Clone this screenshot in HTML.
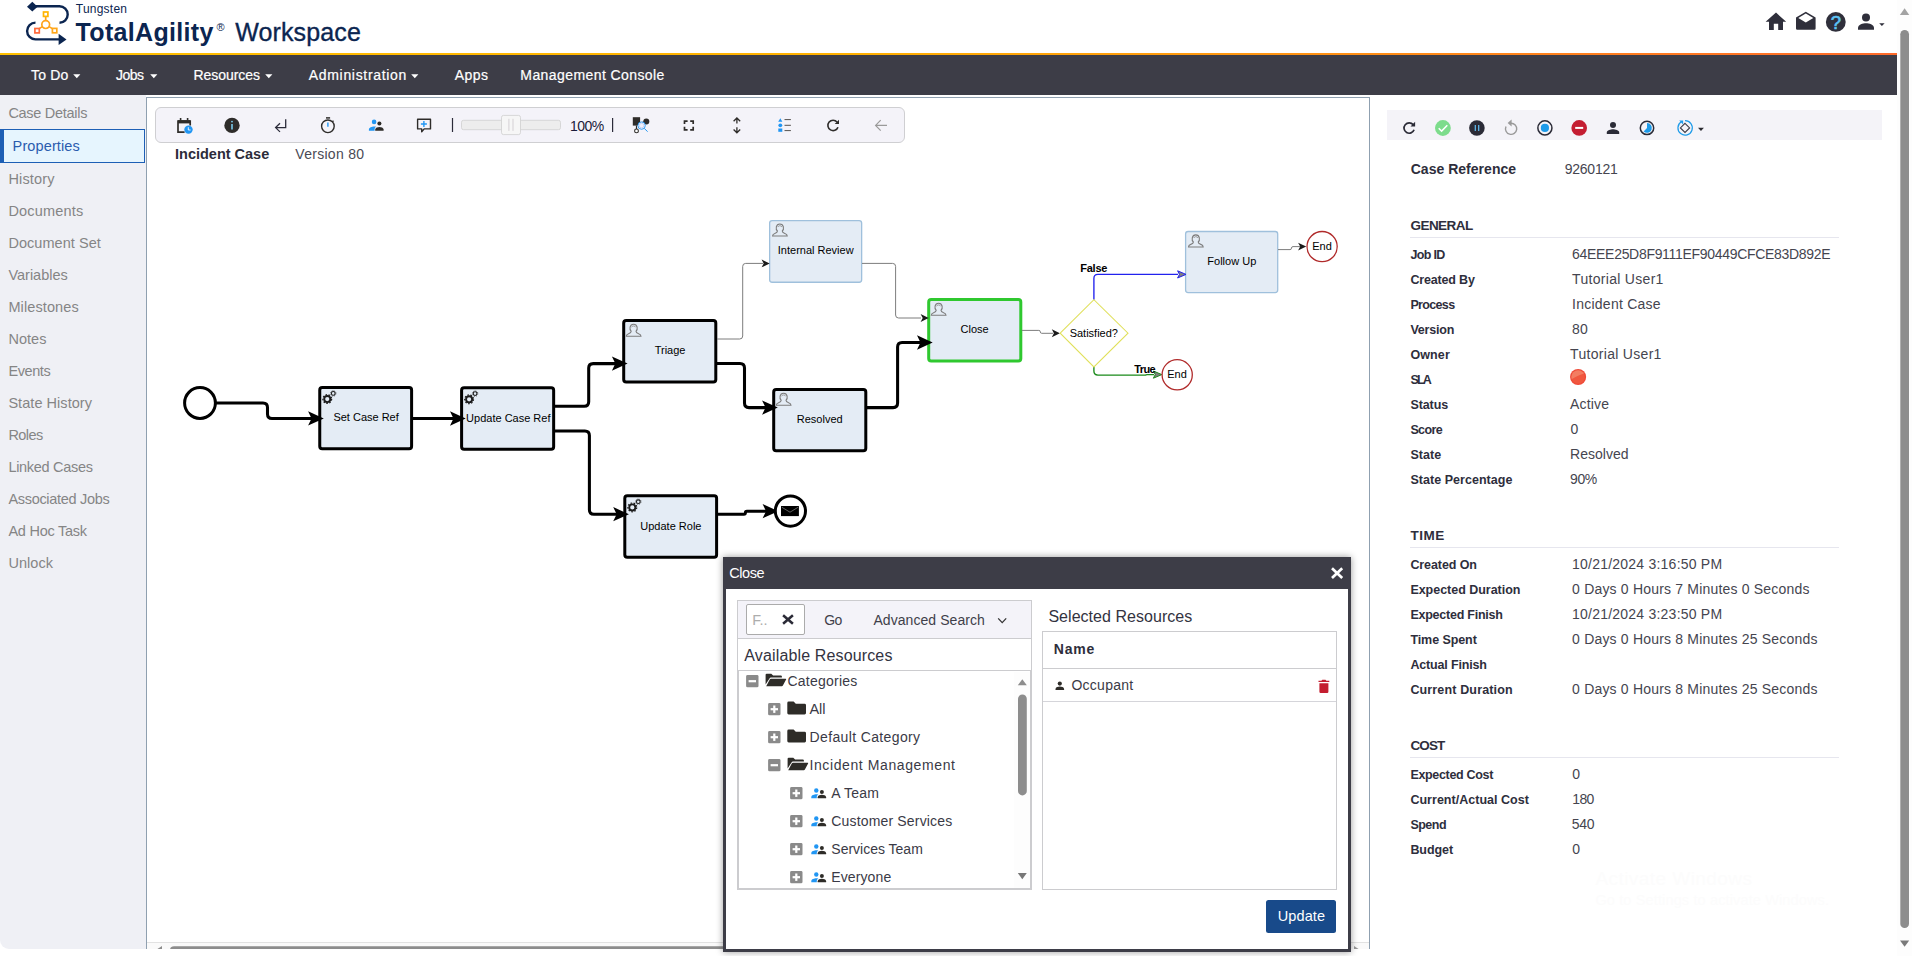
<!DOCTYPE html>
<html><head><meta charset="utf-8"><title>TotalAgility Workspace</title>
<style>
html,body{margin:0;padding:0;}
body{width:1912px;height:956px;overflow:hidden;background:#fff;position:relative;font-family:"Liberation Sans",sans-serif;}
.t{position:absolute;white-space:nowrap;line-height:1;}
.b{position:absolute;box-sizing:border-box;}
svg{position:absolute;overflow:visible;}
</style></head><body>
<div class="b" style="left:1897px;top:0px;width:15px;height:956px;background:#fdfdfd;"></div>
<div class="b" style="left:0px;top:53px;width:1897px;height:2px;background:linear-gradient(90deg,#ffc000 0%,#ffb000 45%,#ff6a2a 100%);"></div>
<div class="b" style="left:0px;top:55px;width:1897px;height:40px;background:#3d3d47;"></div>
<div class="b" style="left:0px;top:95px;width:146px;height:854px;background:#eff0f5;border-radius:0 0 0 9px;"></div>
<div class="b" style="left:146px;top:97px;width:1224px;height:852px;background:#fff;border:1px solid #8fa0b0;border-bottom:none;"></div>
<div class="b" style="left:1371px;top:95px;width:526px;height:861px;background:#fff;"></div>
<div class="b" style="left:147px;top:942px;width:1222px;height:7px;background:#fafafa;border-top:1px solid #e2e2e2;"></div>
<svg style="left:147px;top:943px;overflow:hidden" width="1222" height="6" viewBox="147 943 1222 6"><path d="M156.5 949.6 L162 946 V949.6 Z" fill="#8d8d8d"/><rect x="170" y="946.2" width="1170" height="9" rx="4" fill="#8d8d8d"/><path d="M1354 946 L1359.5 949.6 H1354 Z" fill="#9a9a9a"/></svg>
<svg style="left:15px;top:0" width="120" height="50" viewBox="0 0 120 50">
<g fill="none" stroke="#0b2550" stroke-width="2.4" stroke-linecap="butt">
<path d="M20 6.3 H44.5 A8.2 8.2 0 0 1 44.5 22.7"/>
<path d="M20.5 22.6 A8.4 8.4 0 0 0 20.5 39.4 H45"/>
</g>
<path d="M12 6.7 L17.3 1.8 L22.6 6.7 L17.3 11.6 Z" fill="#0b2550"/>
<path d="M43.6 33.8 L51.5 39.4 L43.6 45 Z" fill="#0b2550"/>
<g fill="none" stroke-width="1.7">
<circle cx="30.7" cy="24.6" r="3.9" stroke="#ffa31a"/>
<path d="M30.7 20.7 V16.6 M27.3 26.6 L24.3 28.6 M34.1 26.6 L37.3 28.6" stroke="#ffa31a"/>
<rect x="28.5" y="12" width="4.4" height="4.4" stroke="#ffb400"/>
<rect x="19.9" y="28.5" width="4.4" height="4.4" stroke="#ff6a3c"/>
<rect x="37.4" y="28.4" width="4.4" height="4.4" stroke="#ffa71a"/>
</g></svg>
<div class="t" style="left:75.80px;top:3px;font-size:12px;letter-spacing:0.230px;color:#0b2550;">Tungsten</div>
<div class="t" style="left:75.60px;top:20px;font-size:25px;font-weight:bold;letter-spacing:0.313px;color:#0b2550;">TotalAgility</div>
<div class="t" style="left:216.60px;top:22px;font-size:11px;color:#0b2550;">®</div>
<div class="t" style="left:235.20px;top:20px;font-size:25px;letter-spacing:0.127px;color:#0b2550;-webkit-text-stroke:0.35px #0b2550;">Workspace</div>
<svg style="left:1760px;top:8px" width="130" height="30" viewBox="1760 8 130 30">
<g fill="#2f2f3b">
<path d="M1765.6 21.8 L1776 12.6 L1786.2 21.8 H1783 V29.9 H1778.2 V23.7 H1773.8 V29.9 H1769 V21.8 Z"/>
<path d="M1796 17.4 L1805.8 11.8 L1815.6 17.4 V28.6 A1.2 1.2 0 0 1 1814.4 29.8 H1797.2 A1.2 1.2 0 0 1 1796 28.6 Z"/>
<path d="M1798.3 17.9 L1805.8 13.5 L1813.3 17.9 L1805.8 22.6 Z" fill="#fff"/>
<circle cx="1835.8" cy="21.9" r="9.9"/>
<circle cx="1866" cy="17.6" r="4"/>
<path d="M1858 29.8 V27.8 C1858 24.6 1863 23.2 1866 23.2 C1869 23.2 1874 24.6 1874 27.8 V29.8 Z"/>
<path d="M1879.2 23.2 H1884.6 L1881.9 26 Z"/>
</g>
<text x="1835.9" y="28.9" text-anchor="middle" font-family="Liberation Sans" font-size="18.5" fill="#5cc3f5" stroke="#5cc3f5" stroke-width="0.6">?</text>
</svg>
<div class="t" style="left:31.00px;top:68px;font-size:14px;letter-spacing:0.207px;color:#fff;-webkit-text-stroke:0.2px #fff;">To Do</div>
<svg style="left:73.3px;top:74px" width="8" height="5" viewBox="0 0 8 5"><path d="M0.2 0.3 H7.4 L3.8 4.2 Z" fill="#fff"/></svg>
<div class="t" style="left:116.00px;top:68px;font-size:14px;letter-spacing:-0.491px;color:#fff;-webkit-text-stroke:0.2px #fff;">Jobs</div>
<svg style="left:149.5px;top:74px" width="8" height="5" viewBox="0 0 8 5"><path d="M0.2 0.3 H7.4 L3.8 4.2 Z" fill="#fff"/></svg>
<div class="t" style="left:193.40px;top:68px;font-size:14px;letter-spacing:-0.027px;color:#fff;-webkit-text-stroke:0.2px #fff;">Resources</div>
<svg style="left:265.0px;top:74px" width="8" height="5" viewBox="0 0 8 5"><path d="M0.2 0.3 H7.4 L3.8 4.2 Z" fill="#fff"/></svg>
<div class="t" style="left:308.80px;top:68px;font-size:14px;letter-spacing:0.676px;color:#fff;-webkit-text-stroke:0.2px #fff;">Administration</div>
<svg style="left:410.9px;top:74px" width="8" height="5" viewBox="0 0 8 5"><path d="M0.2 0.3 H7.4 L3.8 4.2 Z" fill="#fff"/></svg>
<div class="t" style="left:454.80px;top:68px;font-size:14px;letter-spacing:0.396px;color:#fff;-webkit-text-stroke:0.2px #fff;">Apps</div>
<div class="t" style="left:520.30px;top:68px;font-size:14px;letter-spacing:0.419px;color:#fff;-webkit-text-stroke:0.2px #fff;">Management Console</div>
<div class="t" style="left:8.40px;top:106px;font-size:14.5px;letter-spacing:-0.282px;color:#858585;">Case Details</div>
<div class="b" style="left:0px;top:129px;width:145px;height:34px;background:#e6f5fe;border:1px solid #1d5fb5;border-left:4px solid #1d5fb5;"></div>
<div class="t" style="left:12.60px;top:139px;font-size:14.5px;letter-spacing:0.124px;color:#2a5cae;">Properties</div>
<div class="t" style="left:8.40px;top:172px;font-size:14.5px;letter-spacing:0.147px;color:#858585;">History</div>
<div class="t" style="left:8.40px;top:204px;font-size:14.5px;letter-spacing:0.183px;color:#858585;">Documents</div>
<div class="t" style="left:8.40px;top:236px;font-size:14.5px;letter-spacing:0.056px;color:#858585;">Document Set</div>
<div class="t" style="left:8.40px;top:268px;font-size:14.5px;letter-spacing:0.003px;color:#858585;">Variables</div>
<div class="t" style="left:8.40px;top:300px;font-size:14.5px;letter-spacing:0.110px;color:#858585;">Milestones</div>
<div class="t" style="left:8.40px;top:332px;font-size:14.5px;letter-spacing:0.030px;color:#858585;">Notes</div>
<div class="t" style="left:8.40px;top:364px;font-size:14.5px;letter-spacing:-0.406px;color:#858585;">Events</div>
<div class="t" style="left:8.40px;top:396px;font-size:14.5px;letter-spacing:0.050px;color:#858585;">State History</div>
<div class="t" style="left:8.40px;top:428px;font-size:14.5px;letter-spacing:-0.568px;color:#858585;">Roles</div>
<div class="t" style="left:8.40px;top:460px;font-size:14.5px;letter-spacing:-0.305px;color:#858585;">Linked Cases</div>
<div class="t" style="left:8.40px;top:492px;font-size:14.5px;letter-spacing:-0.306px;color:#858585;">Associated Jobs</div>
<div class="t" style="left:8.40px;top:524px;font-size:14.5px;letter-spacing:-0.243px;color:#858585;">Ad Hoc Task</div>
<div class="t" style="left:8.40px;top:556px;font-size:14.5px;letter-spacing:0.056px;color:#858585;">Unlock</div>
<svg style="left:1896px;top:0" width="16" height="956" viewBox="0 0 16 956">
<path d="M3.9 15 L8.6 8.2 L13.3 15 Z" fill="#a3a3a3"/>
<rect x="4.3" y="30" width="8.7" height="898" rx="4.3" fill="#8d8d8d"/>
<path d="M4 940.4 L8.6 946.8 L13.2 940.4 Z" fill="#7a7a7a"/>
</svg>
<div class="b" style="left:155px;top:107px;width:750px;height:36px;background:#f4f3f9;border:1px solid #cfcfd2;border-radius:6px;"></div>
<svg style="left:0;top:0" width="1912" height="200" viewBox="0 0 1912 200">
<!-- calendar -->
<g>
<path d="M178 120.2 H190.2 V123.4 H178 Z" fill="#2e2c2a"/>
<path d="M180.6 117.9 V120.5 M187.6 117.9 V120.5" stroke="#2e2c2a" stroke-width="1.6" fill="none"/>
<path d="M184.6 132.1 H178 V121 H190.2 V125.6" stroke="#2e2c2a" stroke-width="1.7" fill="none"/>
<circle cx="188.5" cy="129.6" r="4.2" fill="#2196f3"/>
<path d="M188.3 127.2 V130 H190.6" stroke="#fff" stroke-width="0.9" fill="none"/>
</g>
<!-- info -->
<circle cx="232" cy="125.4" r="7.7" fill="#2e2c2a"/>
<path d="M232 123.9 V129.6" stroke="#7fd3f7" stroke-width="1.5"/><circle cx="232" cy="121.6" r="0.9" fill="#7fd3f7"/>
<!-- return -->
<path d="M285.7 119.3 V127.6 H275.6 M280 123.3 L275.6 127.6 L280 131.9" stroke="#2b2b3a" stroke-width="1.3" fill="none"/>
<!-- stopwatch -->
<circle cx="327.9" cy="126.3" r="6.3" stroke="#2e2c2a" stroke-width="1.4" fill="none"/>
<path d="M326 117.9 H330.1" stroke="#2e2c2a" stroke-width="1.5"/>
<path d="M332.4 121.8 L333.5 120.7" stroke="#2e2c2a" stroke-width="1.3"/>
<path d="M327.9 122.4 V126.7" stroke="#2196f3" stroke-width="1.4"/>
<!-- people -->
<circle cx="374.1" cy="121.9" r="2.3" fill="#2196f3"/>
<path d="M368.9 130.8 V129.6 C368.9 127.6 372 126.6 374.1 126.6 C374.7 126.6 375.4 126.7 376.1 126.8 C375 127.5 374.6 128.4 374.6 129.5 V130.8 Z" fill="#2196f3"/>
<circle cx="379.4" cy="123.5" r="2.05" fill="#2e2c2a"/>
<path d="M375.2 130.8 V129.6 C375.2 127.9 377.8 127.1 379.4 127.1 C381 127.1 383.6 127.9 383.6 129.6 V130.8 Z" fill="#2e2c2a"/>
<!-- comment plus -->
<path d="M417.6 119.3 H430.5 V128.9 H424.2 L421.7 131.8 V128.9 H417.6 Z" stroke="#2e2c2a" stroke-width="1.4" fill="none" stroke-linejoin="round"/>
<path d="M420.9 124 H426.9 M423.9 121 V127" stroke="#2196f3" stroke-width="1.4"/>
<!-- separators -->
<path d="M452.5 117.9 V132 M612.6 117.9 V132" stroke="#2b2b3a" stroke-width="1.2"/>
<!-- slider -->
<rect x="461.5" y="120.3" width="99" height="9.4" rx="2" fill="#ededed" stroke="#cfcfcf" stroke-width="0.8"/>
<rect x="501.5" y="115.4" width="19" height="19.2" rx="2" fill="#f6f6f6" stroke="#cfcfcf" stroke-width="0.8"/>
<path d="M508.9 118.8 V130.9 M513 118.8 V130.9" stroke="#d4d0d4" stroke-width="1"/>
<!-- find -->
<rect x="632.8" y="117.2" width="7.3" height="8.4" fill="#2e2c2a"/>
<circle cx="646.3" cy="121.6" r="3" fill="#2e2c2a"/>
<path d="M640 123 L644 122 M636.5 125.6 V129" stroke="#2e2c2a" stroke-width="1.2"/>
<circle cx="636.5" cy="130.9" r="1.9" fill="#fff" stroke="#2e2c2a" stroke-width="1.1"/>
<circle cx="641.6" cy="125.6" r="3.7" fill="#f1f0fa" stroke="#2196f3" stroke-width="0.9"/>
<circle cx="641.6" cy="125.6" r="2.3" fill="none" stroke="#9db8ef" stroke-width="0.5"/>
<path d="M644.3 128.4 L647.6 131.7" stroke="#2196f3" stroke-width="1"/>
<!-- fullscreen -->
<path d="M684.5 124 V121.1 H687.6 M690.2 121.1 H693.2 V124 M693.2 126.8 V129.8 H690.2 M687.6 129.8 H684.5 V126.8" stroke="#2e2c2a" stroke-width="1.7" fill="none"/>
<!-- updown -->
<path d="M736.9 118.2 V123.6 M733.6 121.3 L736.9 118 L740.2 121.3 M736.9 127.2 V132.6 M733.6 129.5 L736.9 132.8 L740.2 129.5" stroke="#2e2c2a" stroke-width="1.3" fill="none"/>
<!-- legend -->
<path d="M778.2 121.7 L780.3 118.2 L782.4 121.7 Z" fill="#2196f3"/>
<circle cx="780.3" cy="125.3" r="1.9" fill="#2196f3"/>
<rect x="778.3" y="128.5" width="4" height="3.3" fill="#2196f3"/>
<path d="M784.5 119.6 H790.9 M784.5 125.3 H790.9 M784.5 130.6 H790.9" stroke="#55524f" stroke-width="1"/>
<!-- refresh -->
<path d="M837.08 122.06 A5.2 5.2 0 1 0 837.99 127.18" stroke="#2e2c2a" stroke-width="1.6" fill="none"/>
<path d="M839 119.8 V124.1 H834.7 Z" fill="#2e2c2a"/>
<!-- back -->
<path d="M887 125.4 H876 M880.7 120.2 L875.6 125.4 L880.7 130.6" stroke="#9a9a9a" stroke-width="1.2" fill="none"/>
</svg>
<div class="t" style="left:569.90px;top:119px;font-size:14px;letter-spacing:-0.469px;color:#1b1b3a;">100%</div>
<div class="t" style="left:175.10px;top:147px;font-size:14.5px;font-weight:bold;letter-spacing:-0.015px;color:#2c2c3a;">Incident Case</div>
<div class="t" style="left:295.30px;top:147px;font-size:14px;letter-spacing:0.282px;color:#4a4a55;">Version 80</div>
<svg style="left:0;top:0" width="1912" height="956" viewBox="0 0 1912 956">
<rect x="319.75" y="387.5" width="91.85" height="61.2" rx="2.5" fill="#e4ecf5" stroke="#000" stroke-width="3"/>
<g transform="translate(319.75,387.5)"><circle cx="7.5" cy="11.6" r="3.05" fill="none" stroke="#1c1c1c" stroke-width="1.9"/>
<circle cx="7.5" cy="11.6" r="4.4" fill="none" stroke="#1c1c1c" stroke-width="1.2" stroke-dasharray="1.6 1.47"/>
<circle cx="13.5" cy="5.9" r="1.85" fill="none" stroke="#1c1c1c" stroke-width="1.1"/>
<circle cx="13.5" cy="5.9" r="2.7" fill="none" stroke="#1c1c1c" stroke-width="0.7" stroke-dasharray="1.1 1.02"/></g>
<rect x="461.6" y="387.7" width="92.05" height="61.55" rx="2.5" fill="#e4ecf5" stroke="#000" stroke-width="3"/>
<g transform="translate(461.6,387.7)"><circle cx="7.5" cy="11.6" r="3.05" fill="none" stroke="#1c1c1c" stroke-width="1.9"/>
<circle cx="7.5" cy="11.6" r="4.4" fill="none" stroke="#1c1c1c" stroke-width="1.2" stroke-dasharray="1.6 1.47"/>
<circle cx="13.5" cy="5.9" r="1.85" fill="none" stroke="#1c1c1c" stroke-width="1.1"/>
<circle cx="13.5" cy="5.9" r="2.7" fill="none" stroke="#1c1c1c" stroke-width="0.7" stroke-dasharray="1.1 1.02"/></g>
<rect x="623.7" y="320.6" width="92.1" height="61.4" rx="2.5" fill="#e4ecf5" stroke="#000" stroke-width="3"/>
<g transform="translate(626.0,323.70000000000005)" fill="none" stroke="#7c7c7c" stroke-width="1.1"><path d="M5.2 7.6 C3.2 6.2 3.4 0.5 7.6 0.5 C11.8 0.5 12 6.2 10 7.6 C10 9 10.4 9.4 12.6 10 C14.4 10.5 15 11.3 15 12.6 H0.3 C0.3 11.3 0.8 10.5 2.6 10 C4.8 9.4 5.2 9 5.2 7.6 Z"/><path d="M5.6 3.6 C6 1.8 9.2 1.8 9.6 3.6" stroke-width="0.7"/></g>
<rect x="624.8" y="495.8" width="91.8" height="61.45" rx="2.5" fill="#e4ecf5" stroke="#000" stroke-width="3"/>
<g transform="translate(624.8,495.8)"><circle cx="7.5" cy="11.6" r="3.05" fill="none" stroke="#1c1c1c" stroke-width="1.9"/>
<circle cx="7.5" cy="11.6" r="4.4" fill="none" stroke="#1c1c1c" stroke-width="1.2" stroke-dasharray="1.6 1.47"/>
<circle cx="13.5" cy="5.9" r="1.85" fill="none" stroke="#1c1c1c" stroke-width="1.1"/>
<circle cx="13.5" cy="5.9" r="2.7" fill="none" stroke="#1c1c1c" stroke-width="0.7" stroke-dasharray="1.1 1.02"/></g>
<rect x="773.7" y="389.6" width="92.1" height="61.2" rx="2.5" fill="#e4ecf5" stroke="#000" stroke-width="3"/>
<g transform="translate(776.0,392.70000000000005)" fill="none" stroke="#7c7c7c" stroke-width="1.1"><path d="M5.2 7.6 C3.2 6.2 3.4 0.5 7.6 0.5 C11.8 0.5 12 6.2 10 7.6 C10 9 10.4 9.4 12.6 10 C14.4 10.5 15 11.3 15 12.6 H0.3 C0.3 11.3 0.8 10.5 2.6 10 C4.8 9.4 5.2 9 5.2 7.6 Z"/><path d="M5.6 3.6 C6 1.8 9.2 1.8 9.6 3.6" stroke-width="0.7"/></g>
<rect x="769.65" y="220.55" width="92" height="61.7" rx="2.5" fill="#e4ecf5" stroke="#9fc0dc" stroke-width="1.3"/>
<g transform="translate(772.25,223.45000000000002)" fill="none" stroke="#7c7c7c" stroke-width="1.1"><path d="M5.2 7.6 C3.2 6.2 3.4 0.5 7.6 0.5 C11.8 0.5 12 6.2 10 7.6 C10 9 10.4 9.4 12.6 10 C14.4 10.5 15 11.3 15 12.6 H0.3 C0.3 11.3 0.8 10.5 2.6 10 C4.8 9.4 5.2 9 5.2 7.6 Z"/><path d="M5.6 3.6 C6 1.8 9.2 1.8 9.6 3.6" stroke-width="0.7"/></g>
<rect x="928.7" y="299.6" width="92.1" height="61.3" rx="2.5" fill="#e4ecf5" stroke="#2fc82f" stroke-width="3"/>
<g transform="translate(931.0,302.70000000000005)" fill="none" stroke="#7c7c7c" stroke-width="1.1"><path d="M5.2 7.6 C3.2 6.2 3.4 0.5 7.6 0.5 C11.8 0.5 12 6.2 10 7.6 C10 9 10.4 9.4 12.6 10 C14.4 10.5 15 11.3 15 12.6 H0.3 C0.3 11.3 0.8 10.5 2.6 10 C4.8 9.4 5.2 9 5.2 7.6 Z"/><path d="M5.6 3.6 C6 1.8 9.2 1.8 9.6 3.6" stroke-width="0.7"/></g>
<rect x="1185.6" y="231.5" width="92.1" height="61.1" rx="2.5" fill="#e4ecf5" stroke="#9fc0dc" stroke-width="1.3"/>
<g transform="translate(1188.1999999999998,234.4)" fill="none" stroke="#7c7c7c" stroke-width="1.1"><path d="M5.2 7.6 C3.2 6.2 3.4 0.5 7.6 0.5 C11.8 0.5 12 6.2 10 7.6 C10 9 10.4 9.4 12.6 10 C14.4 10.5 15 11.3 15 12.6 H0.3 C0.3 11.3 0.8 10.5 2.6 10 C4.8 9.4 5.2 9 5.2 7.6 Z"/><path d="M5.6 3.6 C6 1.8 9.2 1.8 9.6 3.6" stroke-width="0.7"/></g>
<path d="M215.50 403.00 L263.00 403.00 Q267.50 403.00 267.50 407.50 L267.50 413.90 Q267.50 418.40 272.00 418.40 L312.00 418.40" fill="none" stroke="#000" stroke-width="3.05"/>
<path d="M413.00 418.40 L455.00 418.40" fill="none" stroke="#000" stroke-width="3.05"/>
<path d="M555.00 406.30 L584.20 406.30 Q588.70 406.30 588.70 401.80 L588.70 368.10 Q588.70 363.60 593.20 363.60 L616.00 363.60" fill="none" stroke="#000" stroke-width="3.05"/>
<path d="M555.00 431.00 L584.90 431.00 Q589.40 431.00 589.40 435.50 L589.40 509.70 Q589.40 514.20 593.90 514.20 L618.00 514.20" fill="none" stroke="#000" stroke-width="3.05"/>
<path d="M717.00 363.50 L740.00 363.50 Q744.50 363.50 744.50 368.00 L744.50 403.10 Q744.50 407.60 749.00 407.60 L766.00 407.60" fill="none" stroke="#000" stroke-width="3.05"/>
<path d="M867.00 407.60 L893.10 407.60 Q897.60 407.60 897.60 403.10 L897.60 347.00 Q897.60 342.50 902.10 342.50 L922.00 342.50" fill="none" stroke="#000" stroke-width="3.05"/>
<path d="M718.00 514.20 L743.90 514.20 Q745.40 514.20 745.40 512.70 L745.40 512.70 Q745.40 511.20 746.90 511.20 L766.00 511.20" fill="none" stroke="#000" stroke-width="3.05"/>
<path d="M323.80 418.40 L308.10 411.25 L311.55 418.40 L308.10 425.55 Z" fill="#000"/>
<path d="M465.70 418.50 L450.00 411.35 L453.45 418.50 L450.00 425.65 Z" fill="#000"/>
<path d="M627.60 363.60 L611.90 356.45 L615.35 363.60 L611.90 370.75 Z" fill="#000"/>
<path d="M628.90 514.20 L613.20 507.05 L616.65 514.20 L613.20 521.35 Z" fill="#000"/>
<path d="M777.80 407.60 L762.10 400.45 L765.55 407.60 L762.10 414.75 Z" fill="#000"/>
<path d="M932.70 342.50 L917.00 335.35 L920.45 342.50 L917.00 349.65 Z" fill="#000"/>
<path d="M778.30 511.20 L762.60 504.05 L766.05 511.20 L762.60 518.35 Z" fill="#000"/>
<path d="M717.00 339.00 L739.70 339.00 Q742.70 339.00 742.70 336.00 L742.70 266.40 Q742.70 263.40 745.70 263.40 L763.00 263.40" fill="none" stroke="#7d7d7d" stroke-width="1"/>
<path d="M769.70 263.40 L761.60 259.45 L763.71 263.40 L761.60 267.35 Z" fill="#1a1a1a"/>
<path d="M862.00 263.40 L892.60 263.40 Q895.60 263.40 895.60 266.40 L895.60 315.00 Q895.60 318.00 898.60 318.00 L921.00 318.00" fill="none" stroke="#7d7d7d" stroke-width="1"/>
<path d="M928.70 318.00 L920.60 314.05 L922.71 318.00 L920.60 321.95 Z" fill="#1a1a1a"/>
<path d="M1022.00 330.40 L1038.85 330.40 Q1040.30 330.40 1040.30 331.85 L1040.30 331.85 Q1040.30 333.30 1041.75 333.30 L1053.00 333.30" fill="none" stroke="#7d7d7d" stroke-width="1"/>
<path d="M1059.90 333.30 L1051.80 329.35 L1053.91 333.30 L1051.80 337.25 Z" fill="#1a1a1a"/>
<path d="M1278.00 249.60 L1290.00 249.60 Q1291.50 249.60 1291.50 248.10 L1291.50 248.10 Q1291.50 246.60 1293.00 246.60 L1300.00 246.60" fill="none" stroke="#7d7d7d" stroke-width="1"/>
<path d="M1306.20 246.60 L1298.10 242.65 L1300.21 246.60 L1298.10 250.55 Z" fill="#1a1a1a"/>
<path d="M1093.90 299.70 L1093.90 278.40 Q1093.90 274.40 1097.90 274.40 L1178.00 274.40" fill="none" stroke="#2222ee" stroke-width="1.35"/>
<path d="M1186.00 274.40 L1177.60 270.80 L1179.45 274.40 L1177.60 278.00 Z" fill="#808080" stroke="#2222ee" stroke-width="1"/>
<path d="M1093.90 366.90 L1093.90 371.10 Q1093.90 375.10 1097.90 375.10 L1144.94 375.10 Q1145.50 375.10 1146.00 374.85 L1146.00 374.85 Q1146.50 374.60 1147.06 374.60 L1154.00 374.60" fill="none" stroke="#1a8a1a" stroke-width="1.35"/>
<path d="M1161.80 374.60 L1153.40 371.00 L1155.25 374.60 L1153.40 378.20 Z" fill="#808080" stroke="#1e8a1e" stroke-width="1"/>
<circle cx="200" cy="403" r="15.4" fill="#fff" stroke="#000" stroke-width="3"/>
<circle cx="790.4" cy="511.1" r="15.1" fill="#fff" stroke="#000" stroke-width="3"/>
<rect x="781" y="506" width="17.9" height="10.1" fill="#000"/><path d="M781.8 507.2 L790 512.2 L798.2 507.2" stroke="#777" stroke-width="0.8" fill="none"/>
<path d="M1060.2 333.2 L1093.9 299.7 L1128 333.2 L1093.9 366.9 Z" fill="#fff" stroke="#e0e05a" stroke-width="1.05"/>
<circle cx="1322.1" cy="246.6" r="15.1" fill="#fff" stroke="#b02a2a" stroke-width="1.3"/>
<circle cx="1177.2" cy="374.8" r="15.1" fill="#fff" stroke="#b02a2a" stroke-width="1.3"/>
</svg>
<div class="t" style="left:333.39px;top:412px;font-size:11px;color:#000;">Set Case Ref</div>
<div class="t" style="left:466.11px;top:413px;font-size:11px;color:#000;">Update Case Ref</div>
<div class="t" style="left:654.71px;top:345px;font-size:11px;color:#000;">Triage</div>
<div class="t" style="left:640.32px;top:521px;font-size:11px;color:#000;">Update Role</div>
<div class="t" style="left:796.77px;top:414px;font-size:11px;color:#000;">Resolved</div>
<div class="t" style="left:777.79px;top:245px;font-size:11px;color:#000;">Internal Review</div>
<div class="t" style="left:960.54px;top:324px;font-size:11px;color:#000;">Close</div>
<div class="t" style="left:1207.35px;top:256px;font-size:11px;color:#000;">Follow Up</div>
<div class="t" style="left:1069.65px;top:328px;font-size:11px;color:#000;">Satisfied?</div>
<div class="t" style="left:1312.21px;top:241px;font-size:11px;color:#000;">End</div>
<div class="t" style="left:1167.21px;top:369px;font-size:11px;color:#000;">End</div>
<div class="t" style="left:1080.20px;top:263px;font-size:11px;font-weight:bold;letter-spacing:-0.232px;color:#000;">False</div>
<div class="t" style="left:1134.20px;top:364px;font-size:11px;font-weight:bold;letter-spacing:-0.577px;color:#000;">True</div>
<div class="b" style="left:1387px;top:110px;width:495px;height:30px;background:#f4f3f8;"></div>
<svg style="left:0;top:0" width="1912" height="200" viewBox="0 0 1912 200">
<!-- refresh -->
<path d="M1413.18 124.66 A5.2 5.2 0 1 0 1414.09 129.78" stroke="#2b2b37" stroke-width="1.7" fill="none"/>
<path d="M1415.1 121.8 V126.4 H1410.5 Z" fill="#2b2b37"/>
<!-- check -->
<circle cx="1442.9" cy="128" r="7.9" fill="#7ddc8c"/>
<path d="M1438.7 128.3 L1441.6 131.1 L1447.3 125.2" stroke="#fff" stroke-width="1.5" fill="none"/>
<!-- pause -->
<circle cx="1476.9" cy="128" r="7.8" fill="#2b2b37"/>
<path d="M1475.3 124.9 V131.1 M1478.7 124.9 V131.1" stroke="#62bdf2" stroke-width="1.2"/>
<!-- undo -->
<path d="M1506 126.5 A5.6 5.6 0 1 0 1510.9 123.2" stroke="#9a9a9a" stroke-width="1.4" fill="none"/>
<path d="M1511.6 119.6 V126.6 L1507.6 123.1 Z" fill="#9a9a9a"/>
<!-- radio -->
<circle cx="1544.9" cy="127.9" r="7.05" stroke="#2b2b37" stroke-width="1.5" fill="none"/>
<circle cx="1544.9" cy="127.9" r="4.1" fill="#1e9be9"/>
<!-- minus -->
<circle cx="1579.2" cy="127.9" r="7.8" fill="#c41e32"/>
<path d="M1575.2 127.9 H1583.2" stroke="#fff" stroke-width="2"/>
<!-- person -->
<circle cx="1613" cy="124.9" r="3" fill="#2b2b37"/>
<path d="M1606.8 134 V132.4 C1606.8 130.3 1610.9 129.3 1613 129.3 C1615.1 129.3 1619.2 130.3 1619.2 132.4 V134 Z" fill="#2b2b37"/>
<!-- clock -->
<circle cx="1647" cy="127.9" r="6.7" stroke="#2b2b37" stroke-width="1.5" fill="none"/>
<path d="M1647 127.9 V123 A4.9 4.9 0 1 1 1643.6 131.4 Z" fill="#1e9be9"/>
<!-- diamond cycle -->
<path d="M1681.3 121.8 A7.2 7.2 0 1 0 1685 120.7" stroke="#1e9be9" stroke-width="1.2" fill="none"/>
<path d="M1679.2 120.6 H1683.1 V124.4 Z" fill="#1e9be9"/>
<path d="M1685 123.3 L1689.6 127.9 L1685 132.5 L1680.4 127.9 Z" stroke="#3a3a45" stroke-width="1.1" fill="none"/>
<path d="M1698 127.8 H1703.9 L1700.95 131 Z" fill="#2a2a30"/>
</svg>
<div class="t" style="left:1410.70px;top:162px;font-size:14px;font-weight:bold;letter-spacing:0.026px;color:#2e2e3c;">Case Reference</div>
<div class="t" style="left:1564.70px;top:162px;font-size:14px;letter-spacing:-0.234px;color:#45454f;">9260121</div>
<div class="t" style="left:1410.50px;top:219px;font-size:13.5px;font-weight:bold;letter-spacing:-0.551px;color:#2e2e3c;">GENERAL</div>
<div class="b" style="left:1410px;top:237px;width:429px;height:1px;background:#e6e6ee;"></div>
<div class="t" style="left:1410.40px;top:249px;font-size:12.5px;font-weight:bold;letter-spacing:-0.639px;color:#2e2e3c;">Job ID</div>
<div class="t" style="left:1572.10px;top:247px;font-size:14px;letter-spacing:-0.306px;color:#45454f;">64EEE25D8F9111EF90449CFCE83D892E</div>
<div class="t" style="left:1410.40px;top:274px;font-size:12.5px;font-weight:bold;letter-spacing:-0.167px;color:#2e2e3c;">Created By</div>
<div class="t" style="left:1572.10px;top:272px;font-size:14px;letter-spacing:0.300px;color:#45454f;">Tutorial User1</div>
<div class="t" style="left:1410.40px;top:299px;font-size:12.5px;font-weight:bold;letter-spacing:-0.658px;color:#2e2e3c;">Process</div>
<div class="t" style="left:1572.10px;top:297px;font-size:14px;letter-spacing:0.241px;color:#45454f;">Incident Case</div>
<div class="t" style="left:1410.40px;top:324px;font-size:12.5px;font-weight:bold;letter-spacing:-0.194px;color:#2e2e3c;">Version</div>
<div class="t" style="left:1572.10px;top:322px;font-size:14px;letter-spacing:0.027px;color:#45454f;">80</div>
<div class="t" style="left:1410.40px;top:349px;font-size:12.5px;font-weight:bold;letter-spacing:0.126px;color:#2e2e3c;">Owner</div>
<div class="t" style="left:1570.10px;top:347px;font-size:14px;letter-spacing:0.300px;color:#45454f;">Tutorial User1</div>
<div class="t" style="left:1410.40px;top:374px;font-size:12.5px;font-weight:bold;letter-spacing:-1.750px;color:#2e2e3c;">SLA</div>
<div class="t" style="left:1410.40px;top:399px;font-size:12.5px;font-weight:bold;letter-spacing:-0.081px;color:#2e2e3c;">Status</div>
<div class="t" style="left:1570.10px;top:397px;font-size:14px;letter-spacing:0.155px;color:#45454f;">Active</div>
<div class="t" style="left:1410.40px;top:424px;font-size:12.5px;font-weight:bold;letter-spacing:-0.636px;color:#2e2e3c;">Score</div>
<div class="t" style="left:1570.60px;top:422px;font-size:14px;color:#45454f;">0</div>
<div class="t" style="left:1410.40px;top:449px;font-size:12.5px;font-weight:bold;letter-spacing:0.083px;color:#2e2e3c;">State</div>
<div class="t" style="left:1570.10px;top:447px;font-size:14px;letter-spacing:0.005px;color:#45454f;">Resolved</div>
<div class="t" style="left:1410.40px;top:474px;font-size:12.5px;font-weight:bold;letter-spacing:0.037px;color:#2e2e3c;">State Percentage</div>
<div class="t" style="left:1570.10px;top:472px;font-size:14px;letter-spacing:-0.410px;color:#45454f;">90%</div>
<svg style="left:1569px;top:368px" width="18" height="18" viewBox="0 0 18 18"><defs><clipPath id="slac"><circle cx="9.1" cy="9" r="6.8"/></clipPath></defs><circle cx="9.1" cy="9" r="8.05" fill="#ef4a38"/><circle cx="9.1" cy="9" r="6.8" fill="#f0573f"/><path d="M0 12.6 C5 9.5 11 6.5 18 4.6 V0 H0 Z" fill="#f37d62" clip-path="url(#slac)"/></svg>
<div class="t" style="left:1410.50px;top:529px;font-size:13.5px;font-weight:bold;letter-spacing:0.517px;color:#2e2e3c;">TIME</div>
<div class="b" style="left:1410px;top:547px;width:429px;height:1px;background:#e6e6ee;"></div>
<div class="t" style="left:1410.40px;top:559px;font-size:12.5px;font-weight:bold;letter-spacing:-0.086px;color:#2e2e3c;">Created On</div>
<div class="t" style="left:1572.10px;top:557px;font-size:14px;letter-spacing:0.222px;color:#45454f;">10/21/2024 3:16:50 PM</div>
<div class="t" style="left:1410.40px;top:584px;font-size:12.5px;font-weight:bold;letter-spacing:-0.028px;color:#2e2e3c;">Expected Duration</div>
<div class="t" style="left:1572.10px;top:582px;font-size:14px;letter-spacing:0.187px;color:#45454f;">0 Days 0 Hours 7 Minutes 0 Seconds</div>
<div class="t" style="left:1410.40px;top:609px;font-size:12.5px;font-weight:bold;letter-spacing:-0.240px;color:#2e2e3c;">Expected Finish</div>
<div class="t" style="left:1572.10px;top:607px;font-size:14px;letter-spacing:0.222px;color:#45454f;">10/21/2024 3:23:50 PM</div>
<div class="t" style="left:1410.40px;top:634px;font-size:12.5px;font-weight:bold;letter-spacing:-0.083px;color:#2e2e3c;">Time Spent</div>
<div class="t" style="left:1572.10px;top:632px;font-size:14px;letter-spacing:0.188px;color:#45454f;">0 Days 0 Hours 8 Minutes 25 Seconds</div>
<div class="t" style="left:1410.40px;top:659px;font-size:12.5px;font-weight:bold;letter-spacing:-0.157px;color:#2e2e3c;">Actual Finish</div>
<div class="t" style="left:1410.40px;top:684px;font-size:12.5px;font-weight:bold;letter-spacing:0.147px;color:#2e2e3c;">Current Duration</div>
<div class="t" style="left:1572.10px;top:682px;font-size:14px;letter-spacing:0.188px;color:#45454f;">0 Days 0 Hours 8 Minutes 25 Seconds</div>
<div class="t" style="left:1410.50px;top:739px;font-size:13.5px;font-weight:bold;letter-spacing:-0.934px;color:#2e2e3c;">COST</div>
<div class="b" style="left:1410px;top:757px;width:429px;height:1px;background:#e6e6ee;"></div>
<div class="t" style="left:1410.40px;top:769px;font-size:12.5px;font-weight:bold;letter-spacing:-0.319px;color:#2e2e3c;">Expected Cost</div>
<div class="t" style="left:1572.30px;top:767px;font-size:14px;color:#45454f;">0</div>
<div class="t" style="left:1410.40px;top:794px;font-size:12.5px;font-weight:bold;letter-spacing:0.024px;color:#2e2e3c;">Current/Actual Cost</div>
<div class="t" style="left:1572.30px;top:792px;font-size:14px;letter-spacing:-0.680px;color:#45454f;">180</div>
<div class="t" style="left:1410.40px;top:819px;font-size:12.5px;font-weight:bold;letter-spacing:-0.499px;color:#2e2e3c;">Spend</div>
<div class="t" style="left:1571.80px;top:817px;font-size:14px;letter-spacing:-0.330px;color:#45454f;">540</div>
<div class="t" style="left:1410.40px;top:844px;font-size:12.5px;font-weight:bold;letter-spacing:-0.050px;color:#2e2e3c;">Budget</div>
<div class="t" style="left:1572.30px;top:842px;font-size:14px;color:#45454f;">0</div>
<div class="t" style="left:1595.40px;top:869px;font-size:19px;letter-spacing:0.444px;color:#fcfcfc;">Activate Windows</div>
<div class="t" style="left:1595.40px;top:893px;font-size:14.5px;letter-spacing:0.139px;color:#fcfcfc;">Go to Settings to activate Windows.</div>
<div class="b" style="left:723px;top:557px;width:628px;height:395px;background:#fff;border:3px solid #3d3d47;border-top:none;box-shadow:0 0 7px rgba(0,0,0,0.4);"></div>
<div class="b" style="left:723px;top:557px;width:628px;height:32px;background:#3d3d47;"></div>
<div class="t" style="left:729.30px;top:566px;font-size:14.5px;letter-spacing:-0.443px;color:#fff;">Close</div>
<svg style="left:1330px;top:566px" width="14" height="14" viewBox="0 0 14 14"><path d="M2 2.2 L12.2 12 M12.2 2.2 L2 12" stroke="#fff" stroke-width="2.7"/></svg>
<div class="b" style="left:737px;top:600px;width:295px;height:290px;background:#fff;border:1px solid #cccccf;"></div>
<div class="b" style="left:738px;top:601px;width:293px;height:38px;background:#f4f3f9;border-bottom:1px solid #cccccf;"></div>
<div class="b" style="left:746px;top:604px;width:59px;height:31px;background:#fff;border:1px solid #ababab;border-radius:2px;"></div>
<div class="t" style="left:752.20px;top:613px;font-size:14.5px;color:#adadad;">F..</div>
<svg style="left:782px;top:614.4px" width="13" height="12" viewBox="0 0 13 12"><path d="M1.1 1.2 L10.9 9.8 M10.9 1.2 L1.1 9.8" stroke="#2b2b37" stroke-width="2.5"/></svg>
<div class="t" style="left:824.20px;top:613px;font-size:14px;letter-spacing:-0.676px;color:#3f3f4a;">Go</div>
<div class="t" style="left:873.40px;top:613px;font-size:14px;letter-spacing:0.070px;color:#3f3f4a;">Advanced Search</div>
<svg style="left:997px;top:616px" width="11" height="9" viewBox="0 0 11 9"><path d="M1.2 2.4 L5.2 6.6 L9.2 2.4" stroke="#333" stroke-width="1.3" fill="none"/></svg>
<div class="t" style="left:744.30px;top:648px;font-size:16px;letter-spacing:0.141px;color:#33333f;">Available Resources</div>
<div class="b" style="left:738px;top:670px;width:293px;height:219px;border:1px solid #cccccf;"></div>
<svg style="left:746px;top:674.7px" width="13" height="13" viewBox="0 0 13 13"><rect x="0.1" y="0" width="12.4" height="12.3" rx="1.4" fill="#8a8a8a"/><path d="M2.6 6.2 H10" stroke="#fff" stroke-width="2.2"/></svg>
<svg style="left:764.6px;top:672.9px" width="22" height="14" viewBox="0 0 22 14"><path d="M0.6 11.6 V1.8 Q0.6 0.7 1.7 0.7 H6.3 L8.1 2.5 H15.8 Q16.9 2.5 16.9 3.6 V4.6 H6 Q4.9 4.6 4.5 5.6 Z" fill="#2e2c28"/><path d="M1.2 13.2 L4.9 6.3 Q5.2 5.7 6 5.7 H20.6 Q21.5 5.7 21.1 6.5 L17.9 12.6 Q17.5 13.2 16.8 13.2 Z" fill="#2e2c28"/></svg>
<div class="t" style="left:787.50px;top:674px;font-size:14px;letter-spacing:0.233px;color:#3a3a46;">Categories</div>
<svg style="left:767.8px;top:702.5px" width="13" height="13" viewBox="0 0 13 13"><rect x="0.1" y="0" width="12.4" height="12.3" rx="1.4" fill="#8a8a8a"/><path d="M2.6 6.2 H10" stroke="#fff" stroke-width="2.2"/><path d="M6.3 2.5 V9.9" stroke="#fff" stroke-width="2.2"/></svg>
<svg style="left:786.7px;top:700.9px" width="20" height="14" viewBox="0 0 20 14"><path d="M0.3 2 Q0.3 0.6 1.7 0.6 H6.6 L8.8 2.8 H17.6 Q19 2.8 19 4.2 V12 Q19 13.4 17.6 13.4 H1.7 Q0.3 13.4 0.3 12 Z" fill="#2e2c28"/></svg>
<div class="t" style="left:809.40px;top:702px;font-size:14.5px;color:#3a3a46;">All</div>
<svg style="left:767.8px;top:730.6px" width="13" height="13" viewBox="0 0 13 13"><rect x="0.1" y="0" width="12.4" height="12.3" rx="1.4" fill="#8a8a8a"/><path d="M2.6 6.2 H10" stroke="#fff" stroke-width="2.2"/><path d="M6.3 2.5 V9.9" stroke="#fff" stroke-width="2.2"/></svg>
<svg style="left:786.7px;top:728.9px" width="20" height="14" viewBox="0 0 20 14"><path d="M0.3 2 Q0.3 0.6 1.7 0.6 H6.6 L8.8 2.8 H17.6 Q19 2.8 19 4.2 V12 Q19 13.4 17.6 13.4 H1.7 Q0.3 13.4 0.3 12 Z" fill="#2e2c28"/></svg>
<div class="t" style="left:809.60px;top:730px;font-size:14px;letter-spacing:0.363px;color:#3a3a46;">Default Category</div>
<svg style="left:767.8px;top:758.7px" width="13" height="13" viewBox="0 0 13 13"><rect x="0.1" y="0" width="12.4" height="12.3" rx="1.4" fill="#8a8a8a"/><path d="M2.6 6.2 H10" stroke="#fff" stroke-width="2.2"/></svg>
<svg style="left:786.7px;top:756.9px" width="22" height="14" viewBox="0 0 22 14"><path d="M0.6 11.6 V1.8 Q0.6 0.7 1.7 0.7 H6.3 L8.1 2.5 H15.8 Q16.9 2.5 16.9 3.6 V4.6 H6 Q4.9 4.6 4.5 5.6 Z" fill="#2e2c28"/><path d="M1.2 13.2 L4.9 6.3 Q5.2 5.7 6 5.7 H20.6 Q21.5 5.7 21.1 6.5 L17.9 12.6 Q17.5 13.2 16.8 13.2 Z" fill="#2e2c28"/></svg>
<div class="t" style="left:809.50px;top:758px;font-size:14px;letter-spacing:0.598px;color:#3a3a46;">Incident Management</div>
<svg style="left:790px;top:786.6px" width="13" height="13" viewBox="0 0 13 13"><rect x="0.1" y="0" width="12.4" height="12.3" rx="1.4" fill="#8a8a8a"/><path d="M2.6 6.2 H10" stroke="#fff" stroke-width="2.2"/><path d="M6.3 2.5 V9.9" stroke="#fff" stroke-width="2.2"/></svg>
<svg style="left:811px;top:787.7px" width="16" height="11" viewBox="0 0 16 11"><circle cx="5.3" cy="2.5" r="2.2" fill="#2196f3"/><path d="M0.3 10.3 V9.2 C0.3 7.2 3.4 6.3 5.3 6.3 C5.9 6.3 6.6 6.4 7.3 6.5 C6.2 7.2 5.8 8.1 5.8 9.1 V10.3 Z" fill="#2196f3"/><circle cx="10.9" cy="4" r="2" fill="#2e2c28"/><path d="M6.7 10.3 V9.2 C6.7 7.6 9.3 6.8 10.9 6.8 C12.5 6.8 15.1 7.6 15.1 9.2 V10.3 Z" fill="#2e2c28"/></svg>
<div class="t" style="left:831.30px;top:786px;font-size:14px;letter-spacing:0.212px;color:#3a3a46;">A Team</div>
<svg style="left:790px;top:814.6px" width="13" height="13" viewBox="0 0 13 13"><rect x="0.1" y="0" width="12.4" height="12.3" rx="1.4" fill="#8a8a8a"/><path d="M2.6 6.2 H10" stroke="#fff" stroke-width="2.2"/><path d="M6.3 2.5 V9.9" stroke="#fff" stroke-width="2.2"/></svg>
<svg style="left:811px;top:815.7px" width="16" height="11" viewBox="0 0 16 11"><circle cx="5.3" cy="2.5" r="2.2" fill="#2196f3"/><path d="M0.3 10.3 V9.2 C0.3 7.2 3.4 6.3 5.3 6.3 C5.9 6.3 6.6 6.4 7.3 6.5 C6.2 7.2 5.8 8.1 5.8 9.1 V10.3 Z" fill="#2196f3"/><circle cx="10.9" cy="4" r="2" fill="#2e2c28"/><path d="M6.7 10.3 V9.2 C6.7 7.6 9.3 6.8 10.9 6.8 C12.5 6.8 15.1 7.6 15.1 9.2 V10.3 Z" fill="#2e2c28"/></svg>
<div class="t" style="left:831.30px;top:814px;font-size:14px;letter-spacing:0.165px;color:#3a3a46;">Customer Services</div>
<svg style="left:790px;top:842.6px" width="13" height="13" viewBox="0 0 13 13"><rect x="0.1" y="0" width="12.4" height="12.3" rx="1.4" fill="#8a8a8a"/><path d="M2.6 6.2 H10" stroke="#fff" stroke-width="2.2"/><path d="M6.3 2.5 V9.9" stroke="#fff" stroke-width="2.2"/></svg>
<svg style="left:811px;top:843.7px" width="16" height="11" viewBox="0 0 16 11"><circle cx="5.3" cy="2.5" r="2.2" fill="#2196f3"/><path d="M0.3 10.3 V9.2 C0.3 7.2 3.4 6.3 5.3 6.3 C5.9 6.3 6.6 6.4 7.3 6.5 C6.2 7.2 5.8 8.1 5.8 9.1 V10.3 Z" fill="#2196f3"/><circle cx="10.9" cy="4" r="2" fill="#2e2c28"/><path d="M6.7 10.3 V9.2 C6.7 7.6 9.3 6.8 10.9 6.8 C12.5 6.8 15.1 7.6 15.1 9.2 V10.3 Z" fill="#2e2c28"/></svg>
<div class="t" style="left:831.30px;top:842px;font-size:14px;letter-spacing:-0.005px;color:#3a3a46;">Services Team</div>
<svg style="left:790px;top:870.6px" width="13" height="13" viewBox="0 0 13 13"><rect x="0.1" y="0" width="12.4" height="12.3" rx="1.4" fill="#8a8a8a"/><path d="M2.6 6.2 H10" stroke="#fff" stroke-width="2.2"/><path d="M6.3 2.5 V9.9" stroke="#fff" stroke-width="2.2"/></svg>
<svg style="left:811px;top:871.7px" width="16" height="11" viewBox="0 0 16 11"><circle cx="5.3" cy="2.5" r="2.2" fill="#2196f3"/><path d="M0.3 10.3 V9.2 C0.3 7.2 3.4 6.3 5.3 6.3 C5.9 6.3 6.6 6.4 7.3 6.5 C6.2 7.2 5.8 8.1 5.8 9.1 V10.3 Z" fill="#2196f3"/><circle cx="10.9" cy="4" r="2" fill="#2e2c28"/><path d="M6.7 10.3 V9.2 C6.7 7.6 9.3 6.8 10.9 6.8 C12.5 6.8 15.1 7.6 15.1 9.2 V10.3 Z" fill="#2e2c28"/></svg>
<div class="t" style="left:831.30px;top:870px;font-size:14px;letter-spacing:0.108px;color:#3a3a46;">Everyone</div>
<svg style="left:1014px;top:672px" width="16" height="216" viewBox="0 0 16 216"><rect x="0" y="0" width="16" height="216" fill="#fdfdfd"/>
<path d="M3.8 13.2 L8.3 7.2 L12.8 13.2 Z" fill="#8d8d8d"/><rect x="4" y="22.4" width="8.8" height="101" rx="4.4" fill="#8d8d8d"/><path d="M3.8 201 L8.3 207.2 L12.8 201 Z" fill="#777"/></svg>
<div class="t" style="left:1048.40px;top:609px;font-size:16px;letter-spacing:0.042px;color:#33333f;">Selected Resources</div>
<div class="b" style="left:1042px;top:631px;width:295px;height:259px;background:#fff;border:1px solid #cccccf;"></div>
<div class="b" style="left:1043px;top:668px;width:293px;height:1px;background:#cccccf;"></div>
<div class="b" style="left:1043px;top:701px;width:293px;height:1px;background:#d5d5da;"></div>
<div class="t" style="left:1053.80px;top:642px;font-size:14px;font-weight:bold;letter-spacing:0.756px;color:#2e2e3c;">Name</div>
<svg style="left:1055.2px;top:680.6px" width="10" height="10" viewBox="0 0 10 10"><circle cx="4.8" cy="2.6" r="2.1" fill="#2e2c28"/><path d="M0.5 9 V8 C0.5 6.3 3.2 5.6 4.8 5.6 C6.4 5.6 9.1 6.3 9.1 8 V9 Z" fill="#2e2c28"/></svg>
<div class="t" style="left:1071.40px;top:678px;font-size:14px;letter-spacing:0.268px;color:#3a3a46;">Occupant</div>
<svg style="left:1318px;top:679px" width="13" height="16" viewBox="0 0 13 16"><path d="M0.5 3 V1.7 H3.4 L4.3 0.8 H7.5 L8.4 1.7 H11.3 V3 Z M1.4 4.2 H10.4 V12.8 Q10.4 14 9.2 14 H2.6 Q1.4 14 1.4 12.8 Z" fill="#c41e30"/></svg>
<div class="b" style="left:1266px;top:900px;width:70px;height:33px;background:#184a8a;border-radius:2.5px;"></div>
<div class="t" style="left:1277.70px;top:909px;font-size:14.5px;letter-spacing:0.128px;color:#fff;">Update</div>
</body></html>
